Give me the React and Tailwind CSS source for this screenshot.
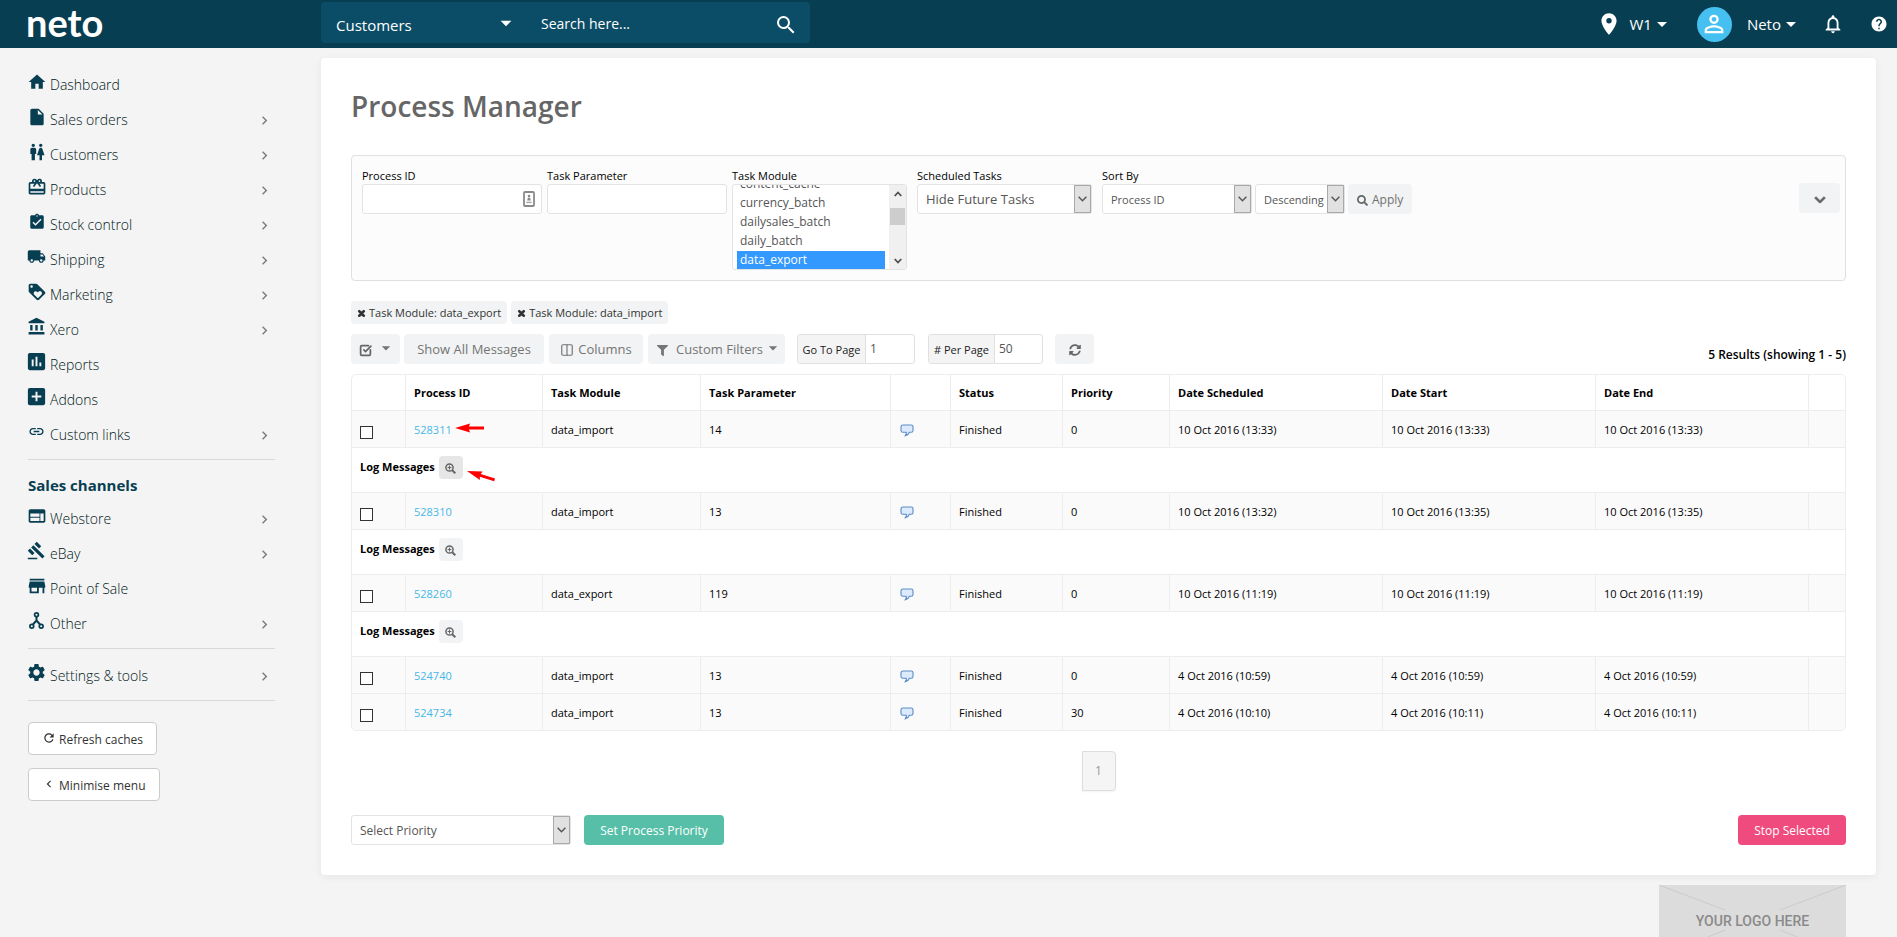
import { Fragment, useEffect, useRef } from "react";
import {
  MdAccountBalance,
  MdAddBox,
  MdArrowDropDown,
  MdAssessment,
  MdAssignmentTurnedIn,
  MdCardGiftcard,
  MdChevronLeft,
  MdChevronRight,
  MdGavel,
  MdHelp,
  MdHome,
  MdInsertDriveFile,
  MdLink,
  MdLocalShipping,
  MdLocationOn,
  MdLoyalty,
  MdNotificationsNone,
  MdPersonOutline,
  MdRefresh,
  MdSearch,
  MdSettings,
  MdStore,
  MdWc,
  MdWeb,
} from "react-icons/md";
import {
  FaChevronDown,
  FaFilter,
  FaSearch,
  FaSyncAlt,
  FaTimes,
} from "react-icons/fa";
import { Columns2, SquareCheckBig } from "lucide-react";

const mainLinks = [
  { name: "Dashboard", icon: MdHome, size: 20 },
  { name: "Sales orders", icon: MdInsertDriveFile, size: 20, more: true },
  { name: "Customers", icon: MdWc, size: 20, more: true },
  { name: "Products", icon: MdCardGiftcard, size: 20, more: true },
  { name: "Stock control", icon: MdAssignmentTurnedIn, size: 18, more: true },
  { name: "Shipping", icon: MdLocalShipping, size: 19, more: true },
  { name: "Marketing", icon: MdLoyalty, size: 20, more: true },
  { name: "Xero", icon: MdAccountBalance, size: 19, more: true },
  { name: "Reports", icon: MdAssessment, size: 23 },
  { name: "Addons", icon: MdAddBox, size: 23 },
  { name: "Custom links", icon: MdLink, size: 17, more: true },
];

const channelLinks = [
  { name: "Webstore", icon: MdWeb, size: 20, more: true },
  { name: "eBay", icon: MdGavel, size: 19, more: true },
  { name: "Point of Sale", icon: MdStore, size: 22 },
  { name: "Other", icon: NodesIcon, size: 17, more: true },
];

const modules = [
  "content_cache",
  "currency_batch",
  "dailysales_batch",
  "daily_batch",
  "data_export",
  "data_import",
  "ebay_batch",
  "email_batch",
];

const rows = [
  { id: "528311", module: "data_import", param: "14", priority: "0", scheduled: "10 Oct 2016 (13:33)", start: "10 Oct 2016 (13:33)", end: "10 Oct 2016 (13:33)", log: true, marked: true },
  { id: "528310", module: "data_import", param: "13", priority: "0", scheduled: "10 Oct 2016 (13:32)", start: "10 Oct 2016 (13:35)", end: "10 Oct 2016 (13:35)", log: true },
  { id: "528260", module: "data_export", param: "119", priority: "0", scheduled: "10 Oct 2016 (11:19)", start: "10 Oct 2016 (11:19)", end: "10 Oct 2016 (11:19)", log: true },
  { id: "524740", module: "data_import", param: "13", priority: "0", scheduled: "4 Oct 2016 (10:59)", start: "4 Oct 2016 (10:59)", end: "4 Oct 2016 (10:59)" },
  { id: "524734", module: "data_import", param: "13", priority: "30", scheduled: "4 Oct 2016 (10:10)", start: "4 Oct 2016 (10:11)", end: "4 Oct 2016 (10:11)" },
];

function NodesIcon({ size }) {
  return (
    <svg width={size} height={size} viewBox="0 0 17 17" fill="none" stroke="currentColor" strokeWidth="1.7">
      <circle cx="8.5" cy="2.8" r="1.9" />
      <circle cx="3.8" cy="14.2" r="1.9" />
      <circle cx="13.2" cy="14.2" r="1.9" />
      <path d="M8.5 4.7v4.8M8.5 8.5l-3.6 4M8.5 8.5l3.6 4" strokeWidth="2" />
    </svg>
  );
}

function AutofillIcon() {
  return (
    <svg width="12" height="16" viewBox="0 0 12 16" fill="none">
      <rect x="1" y="1" width="10" height="14" rx="1" stroke="#8a8a8a" strokeWidth="1.8" />
      <circle cx="6" cy="5" r="1.3" fill="#8a8a8a" />
      <path d="M4.3 9.4c0-2 .6-3 1.7-3s1.7 1 1.7 3z" fill="#8a8a8a" />
      <path d="M3.3 11.4h5.4" stroke="#a5a5a5" strokeWidth="1.4" />
    </svg>
  );
}

function BubbleIcon() {
  return (
    <svg width="14" height="13" viewBox="0 0 14 13" className="block">
      <path
        d="M3 1h8.2c1 0 1.8.8 1.8 1.8v3.6c0 1-.8 1.800-1.800 1.800H9.400c-.6 1.700-1.900 2.900-4 3.400.8-1.100 1.100-2.200.9-3.400H3c-1.100 0-2-.8-2-1.800V2.800C1 1.800 1.900 1 3 1z"
        fill="#dceaff"
        stroke="#5b8cc4"
        strokeWidth="1.1"
      />
    </svg>
  );
}

function ZoomIcon() {
  return (
    <svg width="11" height="11" viewBox="0 0 11 11" fill="none" stroke="currentColor">
      <circle cx="4.5" cy="4.5" r="3.6" strokeWidth="1.5" />
      <path d="M2.600 4.500h3.800M4.500 2.600v3.800" strokeWidth="1.100" />
      <path d="M7.200 7.200L10.300 10.300" strokeWidth="2" />
    </svg>
  );
}

function RedArrow({ className }) {
  return (
    <svg width="30" height="10" viewBox="0 0 30 10" className={className}>
      <path d="M0 5L15 .6l-1 3L29 3.400v3L14 6.600l1 2.900z" fill="#fe0000" />
    </svg>
  );
}

function NavItem({ item }) {
  return (
    <li>
      <a href="#" className="flex h-[35px] items-center text-[14px] font-[350] text-[#001820]">
        <span className="flex w-[17px] shrink-0 justify-center pb-1 text-[#083e52]">
          <item.icon size={item.size} className="shrink-0" />
        </span>
        <span className="ml-[5px] grow pt-px">{item.name}</span>
        {item.more && (
          <span className="pt-[3px] pr-0.5 text-[#7b7b7b]">
            <MdChevronRight size={17} />
          </span>
        )}
      </a>
    </li>
  );
}

function Select({ label, id, options, className, textClass = "text-[13px]" }) {
  return (
    <div className={`relative ${className}`}>
      <select
        id={id}
        aria-label={label}
        className={`h-[30px] w-full appearance-none rounded-[3px] border border-[#e3e3e3] bg-white pt-0.5 pr-[17px] pl-2 text-[#555] ${textClass}`}
      >
        {options.map((o) => (
          <option key={o}>{o}</option>
        ))}
      </select>
      <span className="pointer-events-none absolute top-px right-px flex h-7 w-[17px] items-center justify-center border border-[#a9a9a9] bg-[#e1e1e1]">
        <svg width="9" height="6" viewBox="0 0 9 6" fill="none" stroke="#555" strokeWidth="1.4">
          <path d="M.6.8l3.900 4 3.900-4" />
        </svg>
      </span>
    </div>
  );
}

function ModuleList() {
  const ref = useRef(null);
  // keep the first selected module in view
  useEffect(() => {
    ref.current.scrollTop = 10;
  }, []);

  return (
    <div className="flex h-[86px] w-[175px] overflow-hidden rounded-[3px] border border-[#e3e3e3] bg-white">
      <select
        ref={ref}
        id="task-module"
        multiple
        defaultValue={["data_export", "data_import"]}
        className="h-full min-w-0 grow overflow-y-scroll pr-1 pl-1 text-[12px] text-[#555] outline-none [scrollbar-width:none]"
      >
        {modules.map((m) => (
          <option
            key={m}
            className="h-[19px] min-h-[19px] px-[3px] py-0 leading-[21px] checked:bg-[#3399ff] checked:bg-[linear-gradient(#3399ff,#3399ff)] checked:text-white"
          >
            {m}
          </option>
        ))}
      </select>
      <div className="flex w-[17px] flex-col items-center bg-[#f0f0f0] text-[#505050]">
        <svg width="8" height="18" viewBox="0 0 8 18" fill="none" stroke="currentColor" strokeWidth="1.8">
          <path d="M.7 11L4 7.500 7.300 11" />
        </svg>
        <div className="mt-[5px] h-[17px] w-[15px] bg-[#cdcdcd]" />
        <svg width="8" height="18" viewBox="0 0 8 18" fill="none" stroke="currentColor" strokeWidth="1.8" className="mt-auto">
          <path d="M.7 8L4 11.500 7.300 8" />
        </svg>
      </div>
    </div>
  );
}

function Topbar() {
  return (
    <header className="flex h-12 shrink-0 items-center bg-[#083e52] text-white">
      <a href="#" className="w-[321px] shrink-0 pb-1 pl-[26px] font-['Lato'] text-[38px] leading-[44px] font-bold">
        neto
      </a>
      <form className="mb-[3px] flex h-[41px] w-[489px] items-center rounded-[4px] bg-[#0b4d66]">
        <div className="relative w-[204px]">
          <select aria-label="Search in" className="w-full appearance-none pt-1.5 pl-[15px] text-[15px]">
            <option>Customers</option>
          </select>
          <MdArrowDropDown size={26} className="pointer-events-none absolute top-0.5 right-[6px]" />
        </div>
        <input
          aria-label="Search"
          placeholder="Search here..."
          className="min-w-0 grow pt-0.5 pl-4 text-[14px] placeholder:text-white"
        />
        <button type="button" aria-label="Search" className="mr-3 pt-1">
          <MdSearch size={24} />
        </button>
      </form>
      <div className="ml-auto flex items-center pr-[9px] text-[15px]">
        <MdLocationOn size={26} />
        <button className="ml-[7px] flex items-center">
          W1
          <MdArrowDropDown size={24} className="-ml-0.5" />
        </button>
        <span className="ml-[23px] flex h-[35px] w-[35px] items-center justify-center rounded-full bg-[#46c0f0]">
          <MdPersonOutline size={28} />
        </span>
        <button className="ml-[15px] flex items-center">
          Neto
          <MdArrowDropDown size={24} className="-ml-0.5" />
        </button>
        <button aria-label="Notifications" className="ml-[19px]">
          <MdNotificationsNone size={22} />
        </button>
        <button aria-label="Help" className="ml-[26px]">
          <MdHelp size={18} />
        </button>
      </div>
    </header>
  );
}

function Sidebar() {
  const btn = "flex h-[33px] items-center rounded-[4px] border border-[#ccc] bg-white px-[13px] pt-0.5";
  return (
    <nav className="w-[321px] shrink-0 pt-[18px] pr-[46px] pl-7">
      <ul>
        {mainLinks.map((item) => (
          <NavItem key={item.name} item={item} />
        ))}
      </ul>
      <hr className="mt-2 border-[#d8d8d8]" />
      <h2 className="h-10 pt-[14px] text-[15px] leading-[22px] font-bold text-[#083e52]">Sales channels</h2>
      <ul>
        {channelLinks.map((item) => (
          <NavItem key={item.name} item={item} />
        ))}
      </ul>
      <hr className="mt-2 mb-2 border-[#d8d8d8]" />
      <ul>
        <NavItem item={{ name: "Settings & tools", icon: MdSettings, size: 21, more: true }} />
      </ul>
      <hr className="mt-2 border-[#d8d8d8]" />
      <div className="mt-[21px] flex flex-col items-start gap-[13px] text-[12px] text-[#333]">
        <button className={btn}>
          <MdRefresh size={14} className="mr-[3px] mb-1" />
          Refresh caches
        </button>
        <button className={btn}>
          <MdChevronLeft size={14} className="mr-[3px] mb-1" />
          Minimise menu
        </button>
      </div>
    </nav>
  );
}

function Filters() {
  const field = "h-[30px] w-full rounded-[3px] border border-[#e3e3e3] bg-white px-2 text-[13px] text-[#555]";
  return (
    <form className="mt-[29px] flex h-[126px] items-start rounded-[4px] border border-[#e0e0e0] bg-[#fcfcfc] pt-3 pr-[5px] pl-[10px] text-[11px] text-black">
      <div className="relative w-[180px]">
        <label htmlFor="process-id" className="block leading-4">Process ID</label>
        <input id="process-id" className={field} />
        <span className="absolute right-[7px] bottom-[7px]">
          <AutofillIcon />
        </span>
      </div>
      <div className="ml-[5px] w-[180px]">
        <label htmlFor="task-parameter" className="block leading-4">Task Parameter</label>
        <input id="task-parameter" className={field} />
      </div>
      <div className="ml-[5px]">
        <label htmlFor="task-module" className="block leading-4">Task Module</label>
        <ModuleList />
      </div>
      <div className="ml-[10px]">
        <label htmlFor="scheduled" className="block leading-4">Scheduled Tasks</label>
        <Select id="scheduled" label="Scheduled Tasks" options={["Hide Future Tasks", "Show Future Tasks"]} className="w-[175px]" />
      </div>
      <div className="ml-[10px]">
        <label htmlFor="sort-by" className="block leading-4">Sort By</label>
        <div className="flex gap-[3px]">
          <Select id="sort-by" label="Sort By" options={["Process ID", "Task Module"]} className="w-[150px]" textClass="text-[11px]" />
          <Select id="sort-dir" label="Sort direction" options={["Descending", "Ascending"]} className="w-[90px]" textClass="text-[11px]" />
          <button type="button" className="flex h-[30px] items-center gap-1 rounded-[4px] bg-[#f1f3f4] px-[9px] pt-0.5 text-[12px] text-[#707070]">
            <FaSearch size={11} className="text-[#666]" />
            Apply
          </button>
        </div>
      </div>
      <button type="button" aria-label="More filters" className="mt-[15px] ml-auto flex h-[30px] w-[41px] items-center justify-center rounded-[4px] bg-[#f1f3f4] pt-1 text-[#666]">
        <FaChevronDown size={12} stroke="currentColor" strokeWidth={40} />
      </button>
    </form>
  );
}

function Toolbar() {
  const btn = "flex h-[30px] items-center rounded-[4px] bg-[#f1f3f4] pt-0.5 text-[13px] text-[#757575]";
  return (
    <>
      <div className="mt-5 flex gap-1 text-[11px] text-[#333]">
        {["data_export", "data_import"].map((m) => (
          <button key={m} className="flex h-[23px] items-center gap-[3px] rounded-[4px] bg-[#f1f3f4] px-[6px] pt-0.5">
            <FaTimes size={9} strokeWidth={60} stroke="currentColor" />
            Task Module: {m}
          </button>
        ))}
      </div>
      <div className="mt-[10px] flex items-center">
        <button aria-label="Select rows" className={`${btn} w-[49px] pl-2`}>
          <SquareCheckBig size={13} strokeWidth={3.2} className="text-[#666]" />
          <MdArrowDropDown size={20} className="ml-1 mb-1" />
        </button>
        <button className={`${btn} ml-1 w-[140px] justify-center`}>Show All Messages</button>
        <button className={`${btn} ml-[5px] w-[94px] justify-center gap-1`}>
          <Columns2 size={14} strokeWidth={2} />
          Columns
        </button>
        <button className={`${btn} ml-[5px] w-[137px] pl-[9px]`}>
          <FaFilter size={11} className="mr-2" />
          Custom Filters
          <MdArrowDropDown size={20} className="mb-1" />
        </button>
        <div className="ml-3 flex h-[30px] w-[118px] overflow-hidden rounded-[3px] border border-[#e0e0e0]">
          <label htmlFor="go-page" className="flex w-[68px] shrink-0 items-center justify-center border-r border-[#e0e0e0] bg-[#f4f4f4] pt-0.5 text-[11px] text-[#222]">
            Go To Page
          </label>
          <input id="go-page" defaultValue="1" className="w-full min-w-0 pl-1 text-[12px] text-[#555]" />
        </div>
        <div className="ml-[13px] flex h-[30px] w-[115px] overflow-hidden rounded-[3px] border border-[#e0e0e0]">
          <label htmlFor="per-page" className="flex w-[66px] shrink-0 items-center justify-center border-r border-[#e0e0e0] bg-[#f4f4f4] pt-0.5 text-[11px] text-[#222]">
            # Per Page
          </label>
          <input id="per-page" defaultValue="50" className="w-full min-w-0 pl-1 text-[12px] text-[#555]" />
        </div>
        <button aria-label="Reload" className={`${btn} ml-3 w-[39px] justify-center`}>
          <FaSyncAlt size={12} className="text-[#666]" />
        </button>
        <p className="mt-3 ml-auto text-[12px] font-semibold text-black">5 Results (showing 1 - 5)</p>
      </div>
    </>
  );
}

function ProcessTable() {
  const cell = "border-t border-l border-[#ededed] px-2 pt-0.5";
  const head = "border-l border-[#ededed] px-2";
  return (
    <div className="mt-[10px] overflow-hidden rounded-[5px] border border-[#ededed]">
      <table className="w-full table-fixed border-separate border-spacing-0 text-left text-[11px] leading-4 text-black">
        <colgroup>
          <col className="w-[53px]" />
          <col className="w-[137px]" />
          <col className="w-[158px]" />
          <col className="w-[190px]" />
          <col className="w-[60px]" />
          <col className="w-[112px]" />
          <col className="w-[107px]" />
          <col />
          <col />
          <col />
          <col className="w-[37px]" />
        </colgroup>
        <thead>
          <tr className="h-[35px]">
            <th aria-label="Selected" />
            <th className={head}>Process ID</th>
            <th className={head}>Task Module</th>
            <th className={head}>Task Parameter</th>
            <th className={head} aria-label="Messages" />
            <th className={head}>Status</th>
            <th className={head}>Priority</th>
            <th className={head}>Date Scheduled</th>
            <th className={head}>Date Start</th>
            <th className={head}>Date End</th>
            <th className={head} aria-label="Actions" />
          </tr>
        </thead>
        <tbody>
          {rows.map((row) => (
            <Fragment key={row.id}>
              <tr className="h-[37px] bg-[#fafafa]">
                <td className="border-t border-[#ededed] px-2 pt-1.5">
                  <input type="checkbox" aria-label={`Select ${row.id}`} className="block h-[13px] w-[13px] appearance-none border border-[#333] bg-white" />
                </td>
                <td className={`${cell} relative`}>
                  <a href="#" className="text-[#46b8e6]">{row.id}</a>
                  {row.marked && <RedArrow className="absolute top-3 left-[49px]" />}
                </td>
                <td className={cell}>{row.module}</td>
                <td className={cell}>{row.param}</td>
                <td className={cell}>
                  <div className="pl-px">
                    <BubbleIcon />
                  </div>
                </td>
                <td className={cell}>Finished</td>
                <td className={cell}>{row.priority}</td>
                <td className={cell}>{row.scheduled}</td>
                <td className={cell}>{row.start}</td>
                <td className={cell}>{row.end}</td>
                <td className={cell} />
              </tr>
              {row.log && (
                <tr className="h-[45px]">
                  <td colSpan={11} className="relative border-t border-[#ededed] px-2 pb-[6px]">
                    <div className="flex items-center gap-1 font-bold">
                      Log Messages
                      <button
                        aria-label="View log messages"
                        className={`flex h-[23px] w-6 items-center justify-center rounded-[4px] pt-0.5 text-[#666] ${row.marked ? "bg-[#e6e6e6]" : "bg-[#f1f3f4]"}`}
                      >
                        <ZoomIcon />
                      </button>
                    </div>
                    {row.marked && <RedArrow className="absolute top-[18px] left-[115px] origin-left rotate-[18deg]" />}
                  </td>
                </tr>
              )}
            </Fragment>
          ))}
        </tbody>
      </table>
    </div>
  );
}

function LogoPlaceholder() {
  return (
    <div className="relative mt-[10px] mr-[51px] ml-auto flex h-[72px] w-[187px] items-center justify-center bg-[#dcdcdc]">
      <svg viewBox="0 0 187 72" className="absolute inset-0 h-full w-full" fill="none" stroke="#cbcbcb">
        <path d="M0 0l66 25M187 0l-66 25M0 72l66-27M187 72l-66-27" />
      </svg>
      <span className="relative font-['Roboto'] text-[14px] font-medium text-[#8a8a8a]">YOUR LOGO HERE</span>
    </div>
  );
}

export default function App() {
  return (
    <div className="flex h-screen flex-col overflow-hidden bg-[#f4f4f4] font-['Open_Sans','Noto_Sans',sans-serif]">
      <Topbar />
      <div className="flex grow items-start">
        <Sidebar />
        <main className="min-w-0 grow pt-[10px]">
          <section className="mr-[21px] rounded-[4px] bg-white px-[30px] pt-7 pb-[30px] shadow-[0_2px_8px_rgba(0,0,0,0.06)]">
            <h1 className="text-[28px] leading-10 font-semibold text-[#666]">Process Manager</h1>
            <Filters />
            <Toolbar />
            <ProcessTable />
            <div className="mt-5 flex justify-center">
              <button className="h-10 w-[34px] rounded-r-[4px] border border-[#ddd] bg-[#f5f5f5] text-[12px] text-[#999] shadow-xs">1</button>
            </div>
            <div className="mt-6 flex items-center">
              <Select label="Select Priority" options={["Select Priority"]} className="w-[220px]" textClass="text-[12px]" />
              <button className="ml-[13px] h-[30px] w-[140px] rounded-[4px] bg-[#57bfa8] pt-0.5 text-[12px] text-white">Set Process Priority</button>
              <button className="ml-auto h-[30px] w-[108px] rounded-[4px] bg-[#f04b7f] pt-0.5 text-[12px] text-white">Stop Selected</button>
            </div>
          </section>
          <LogoPlaceholder />
        </main>
      </div>
    </div>
  );
}
